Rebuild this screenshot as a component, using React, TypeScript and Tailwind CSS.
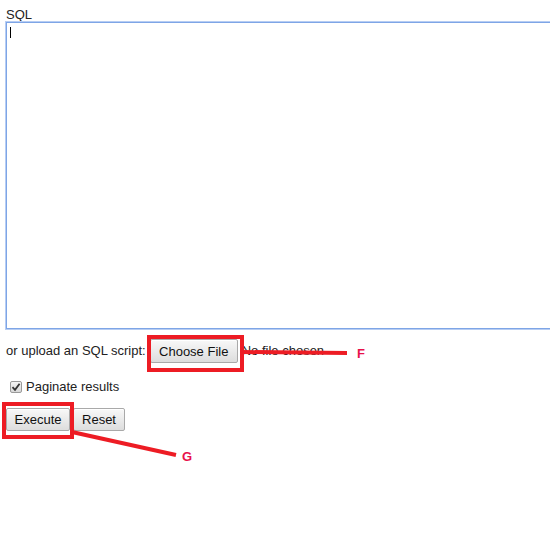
import React from "react";

const font = { fontFamily: '"Liberation Sans", Arial, sans-serif' };

function OldButton({ children, className = "" }: { children: React.ReactNode; className?: string }) {
  return (
    <button
      className={`h-[23px] px-[7px] text-[13px] leading-none text-[#111] border border-[#a9a9a9] rounded-[2px] bg-gradient-to-b from-[#f8f8f8] to-[#dddddd] shadow-[inset_0_1px_0_#fff] ${className}`}
    >
      {children}
    </button>
  );
}

export default function App() {
  return (
    <div className="relative w-[550px] h-[533px] overflow-hidden bg-white text-[#222]" style={font}>
      <div className="pl-[6px] pt-[7px]">
        <div className="text-[13px] leading-[15px]">SQL</div>

        {/* textarea */}
        <div className="relative w-[560px] h-[307px] border border-[#7ea5e6] shadow-[0_0_0_1px_#b7cdf3]">
          <span className="absolute left-[3px] top-[4px] w-px h-[11px] bg-black" />
        </div>

        {/* upload row */}
        <div className="flex items-center mt-[10px] text-[13px]">
          <span>or upload an SQL script:</span>
          <OldButton className="ml-[4px] w-[88px] h-[24px]">Choose File</OldButton>
          <span className="ml-[4px]">No file chosen</span>
        </div>

        {/* paginate */}
        <label className="flex items-center mt-[14px] text-[13px]">
          <span className="ml-[4px] w-[12px] h-[12px] rounded-[2px] border border-[#9a9a9a] bg-gradient-to-b from-[#f4f4f4] to-[#d8d8d8] flex items-center justify-center">
            <svg width="10" height="10" viewBox="0 0 10 10">
              <path d="M1.5 5.2 L4 7.8 L8.6 1.8" fill="none" stroke="#333" strokeWidth="1.8" />
            </svg>
          </span>
          <span className="ml-[4px]">Paginate results</span>
        </label>

        {/* actions */}
        <div className="flex items-center gap-[3px] mt-[11px]">
          <OldButton className="w-[64px]">Execute</OldButton>
          <OldButton className="w-[52px]">Reset</OldButton>
        </div>
      </div>

      {/* annotations */}
      <svg className="absolute inset-0 pointer-events-none" width="550" height="533">
        <rect x="149" y="337" width="93" height="33" fill="none" stroke="#ed1c24" strokeWidth="4" />
        <line x1="242" y1="352" x2="347" y2="353" stroke="#ed1c24" strokeWidth="4" />
        <rect x="4" y="404" width="68" height="33" fill="none" stroke="#ed1c24" strokeWidth="4" />
        <line x1="72" y1="432" x2="176" y2="455" stroke="#ed1c24" strokeWidth="4" />
      </svg>
      <span className="absolute left-[357px] top-[344px] text-[13px] font-bold text-[#e8114a]">F</span>
      <span className="absolute left-[182px] top-[447px] text-[13px] font-bold text-[#e8114a]">G</span>
    </div>
  );
}
